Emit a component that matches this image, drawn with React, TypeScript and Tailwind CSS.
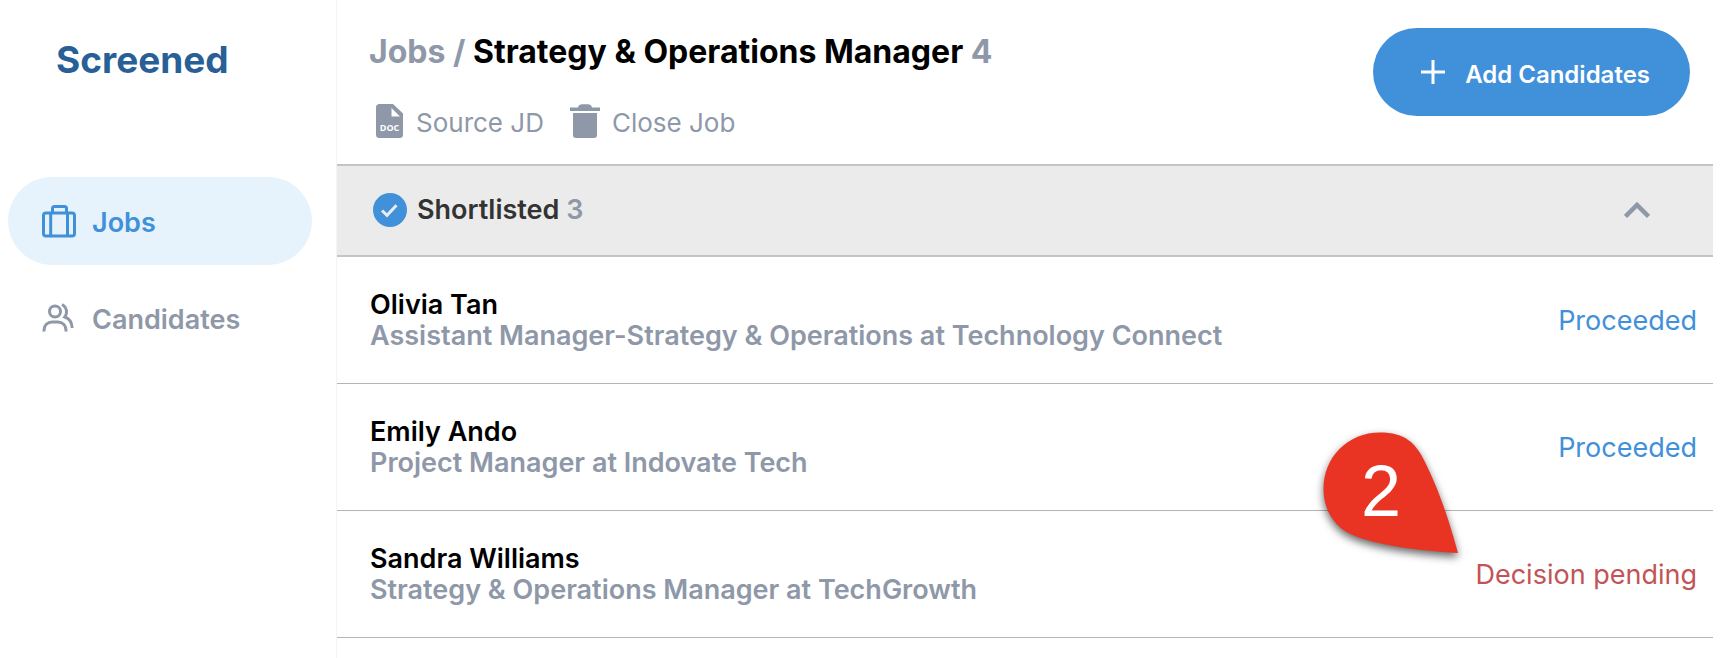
import React from 'react';

const navLinks = [
    {
        index: 1,
        href: '#jobs',
        label: 'Jobs',
        active: true
    },
    {
        index: 2,
        href: '#candidates',
        label: 'Candidates',
        active: false
    },
]

const candidates = [
    {
        index: 1,
        name: 'Olivia Tan',
        role: 'Assistant Manager-Strategy & Operations at Technology Connect',
        status: 'Proceeded',
        pending: false
    },
    {
        index: 2,
        name: 'Emily Ando',
        role: 'Project Manager at Indovate Tech',
        status: 'Proceeded',
        pending: false
    },
    {
        index: 3,
        name: 'Sandra Williams',
        role: 'Strategy & Operations Manager at TechGrowth',
        status: 'Decision pending',
        pending: true
    },
]

function SuitcaseIcon() {
    return (
        <svg width="34" height="34" viewBox="0 0 34 34" fill="none" stroke="currentColor" strokeWidth="3" aria-hidden="true">
            <rect x="1.5" y="9" width="31" height="23" rx="2.5" />
            <path d="M10.5 9V4.5a2 2 0 0 1 2-2h10a2 2 0 0 1 2 2V9M8.7 9v23M25.5 9v23" />
        </svg>
    )
}

function PeopleIcon() {
    return (
        <svg width="34" height="34" viewBox="0 0 34 34" fill="none" stroke="currentColor" strokeWidth="3" aria-hidden="true">
            <circle cx="13" cy="10.500" r="5.500" />
            <path d="M2 30.500v-1.500c0-4.500 3.500-8 8-8h6c4.500 0 8 3.500 8 8v1.500" />
            <path d="M20 3.500c3.500 2 4.700 4.500 4.500 8-.1 1.500-.6 3-1.700 4.500 3.800 1.200 7 5 7.400 11" />
        </svg>
    )
}

function DocIcon() {
    return (
        <svg width="28" height="34" viewBox="0 0 28 34" aria-hidden="true">
            <path fill="currentColor" fillRule="evenodd" d="M3.5 0H17l10 9.500V30.500a3.500 3.500 0 0 1-3.500 3.500h-20A3.500 3.500 0 0 1 0 30.500v-27A3.500 3.500 0 0 1 3.500 0ZM15.500 4v8.500H24Z" />
            <text x="13.5" y="26.500" textAnchor="middle" fontSize="9" fontWeight="700" fill="#fff" className="font-['Open_Sans',sans-serif]">DOC</text>
        </svg>
    )
}

function TrashIcon() {
    return (
        <svg width="30" height="34" viewBox="0 0 30 34" fill="currentColor" aria-hidden="true">
            <path d="M0 3.500h8C8.500 1.500 10 .3 12 .3h6c2 0 3.500 1.200 4 3.200h8v3.500H0Z" />
            <path d="M3 9h24v22a3 3 0 0 1-3 3H6a3 3 0 0 1-3-3Z" />
        </svg>
    )
}

function CheckIcon() {
    return (
        <svg width="34" height="34" viewBox="0 0 34 34" fill="none" aria-hidden="true">
            <circle cx="17" cy="17" r="17" fill="#4090da" />
            <path d="m9 17.500 5 4.800 9.500-10" stroke="#ebebeb" strokeWidth="3" />
        </svg>
    )
}

function StepMarker() {
    return (
        <div className="absolute right-[254px] -top-[79px]">
            <svg width="136" height="122" viewBox="0 0 136 122" className="overflow-visible drop-shadow-[0_4px_4px_rgba(0,0,0,0.6)]" aria-hidden="true">
                <path fill="#e93323" d="M57 .5C25 .5.5 25 .5 57c0 20 10 36 25 44 22 11 62 17 109.500 20C126 88 116 58 102 30 93 11 82 .5 57 .5Z" />
                <text x="58" y="84" textAnchor="middle" fontSize="72" fill="#fff" className="font-['Liberation_Sans',sans-serif]">2</text>
            </svg>
        </div>
    )
}

export default function App() {
    return (
        <div className="flex min-h-screen bg-white font-['Inter',sans-serif] text-[26px] leading-[31px] text-[#8e98a8]">
            <aside className="w-[337px] shrink-0 border-r border-[#f4f4f4] pl-2 pr-6">
                <div className="flex h-[177px] items-start pl-12 pt-9">
                    <a href="#home" className="text-[37px] font-bold leading-12 text-[#285f96]">Screened</a>
                </div>
                <nav className="grid gap-y-[9px]">
                    {
                        navLinks.map((link) => (
                            <a
                                key={link.index}
                                href={link.href}
                                className={`flex h-[88px] items-center gap-x-4 rounded-full pl-[34px] text-[27px] font-semibold ${link.active ? 'bg-[#e6f3fc] text-[#4090da]' : ''}`}
                            >
                                {link.active ? <SuitcaseIcon /> : <PeopleIcon />}
                                <span className="pt-0.5">{link.label}</span>
                            </a>
                        ))
                    }
                </nav>
            </aside>

            <main className="mr-[19px] min-w-0 grow">
                <header className="flex h-[164px] items-start justify-between pl-8 pr-[23px] pt-7">
                    <div>
                        <h1 className="pt-1 text-[32px] font-bold leading-10">
                            <a href="#jobs">Jobs</a> / <span className="text-black">Strategy &amp; Operations Manager</span> 4
                        </h1>
                        <div className="mt-8 flex gap-x-[26px] pl-[7px]">
                            <button type="button" className="flex items-center gap-x-3">
                                <DocIcon />
                                <span className="pt-0.5">Source JD</span>
                            </button>
                            <button type="button" className="flex items-center gap-x-3">
                                <TrashIcon />
                                <span className="pt-0.5">Close Job</span>
                            </button>
                        </div>
                    </div>
                    <button type="button" className="flex h-[88px] items-center gap-x-5 rounded-full bg-[#4090da] pl-12 pr-10 text-[24px] font-semibold text-white">
                        <svg width="24" height="24" viewBox="0 0 24 24" stroke="currentColor" strokeWidth="3" aria-hidden="true">
                            <path d="M12 0v24M0 12h24" />
                        </svg>
                        <span className="pt-1">Add Candidates</span>
                    </button>
                </header>

                <section>
                    <div className="flex h-[93px] items-center justify-between border-y-2 border-[#c4c4c4] bg-[#ebebeb] pb-0.5 pl-9 pr-[63px]">
                        <div className="flex items-center gap-x-2.5">
                            <CheckIcon />
                            <h2 className="text-[27px] font-semibold"><span className="text-[#333333]">Shortlisted</span> 3</h2>
                        </div>
                        <button type="button" aria-label="Collapse shortlisted">
                            <svg width="26" height="18" viewBox="0 0 26 18" fill="none" stroke="currentColor" strokeWidth="4.500" aria-hidden="true">
                                <path d="M1.500 15.500 13 4l11.500 11.500" />
                            </svg>
                        </button>
                    </div>
                    <ul>
                        {
                            candidates.map((candidate) => (
                                <li key={candidate.index} className="relative flex items-center justify-between border-b border-[#b4b4b4] py-8 pl-[33px] pr-4 text-[27px]">
                                    <div className="font-semibold">
                                        <h3 className="text-black">{candidate.name}</h3>
                                        <p>{candidate.role}</p>
                                    </div>
                                    <span className={candidate.pending ? 'text-[#c25457]' : 'text-[#4090da]'}>{candidate.status}</span>
                                    {candidate.pending && <StepMarker />}
                                </li>
                            ))
                        }
                    </ul>
                </section>
            </main>
        </div>
    );
}
